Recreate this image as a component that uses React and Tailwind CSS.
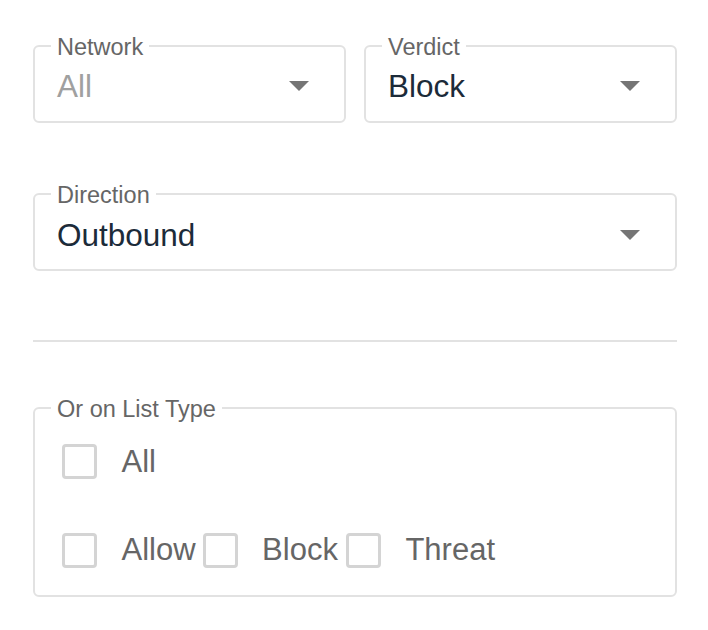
import React from 'react';

const font = { fontFamily: '"Liberation Sans", Arial, sans-serif' };

function Caret() {
  return (
    <svg width="20" height="10" viewBox="0 0 20 10" className="shrink-0">
      <polygon points="0,0 20,0 10,10" fill="#757575" />
    </svg>
  );
}

function Legend({ children }) {
  return (
    <legend className="ml-[-6px] px-[6px] text-[23.5px] leading-[23px] text-[#666]">
      <span className="relative top-[1.5px]">{children}</span>
    </legend>
  );
}

function SelectField({ label, value, muted, className = '' }) {
  return (
    <fieldset className={`rounded-[6px] border-2 border-[#e2e2e2] pl-[22px] pr-[35px] ${className}`}>
      <Legend>{label}</Legend>
      <div className="flex items-center justify-between h-[36px] mt-[11px] mb-[16.5px]">
        <span className={`text-[31.5px] leading-[36px] ${muted ? 'text-[#a0a0a0]' : 'text-[#1c2b39]'}`}>{value}</span>
        <Caret />
      </div>
    </fieldset>
  );
}

function Check({ label, className = '' }) {
  return (
    <label className={`flex items-center ${className}`}>
      <span className="w-[35px] h-[35px] rounded-[4px] border-[3px] border-[#d4d4d4] bg-white shrink-0" />
      <span className="ml-[24.5px] text-[31px] leading-[36px] text-[#666]">{label}</span>
    </label>
  );
}

export default function App() {
  return (
    <div className="w-[708px] h-[630px] bg-white pl-[33px] pr-[31px] pt-[34px]" style={font}>
      <div className="grid grid-cols-2 gap-[18px]">
        <SelectField label="Network" value="All" muted />
        <SelectField label="Verdict" value="Block" />
      </div>

      <SelectField label="Direction" value="Outbound" className="mt-[60px]" />

      <div className="mt-[69px] h-[2px] bg-[#e2e2e2]" />

      <fieldset className="mt-[54px] rounded-[6px] border-2 border-[#e2e2e2] pl-[22px] pr-[22px]">
        <Legend>Or on List Type</Legend>
        <div className="mt-[16px] h-[53px] flex items-center pl-[5px]">
          <Check label="All" />
        </div>
        <div className="mt-[35.5px] mb-[18.5px] h-[53px] flex items-center pl-[5px]">
          <Check label="Allow" className="mr-[7px]" />
          <Check label="Block" className="mr-[8px]" />
          <Check label="Threat" />
        </div>
      </fieldset>
    </div>
  );
}
